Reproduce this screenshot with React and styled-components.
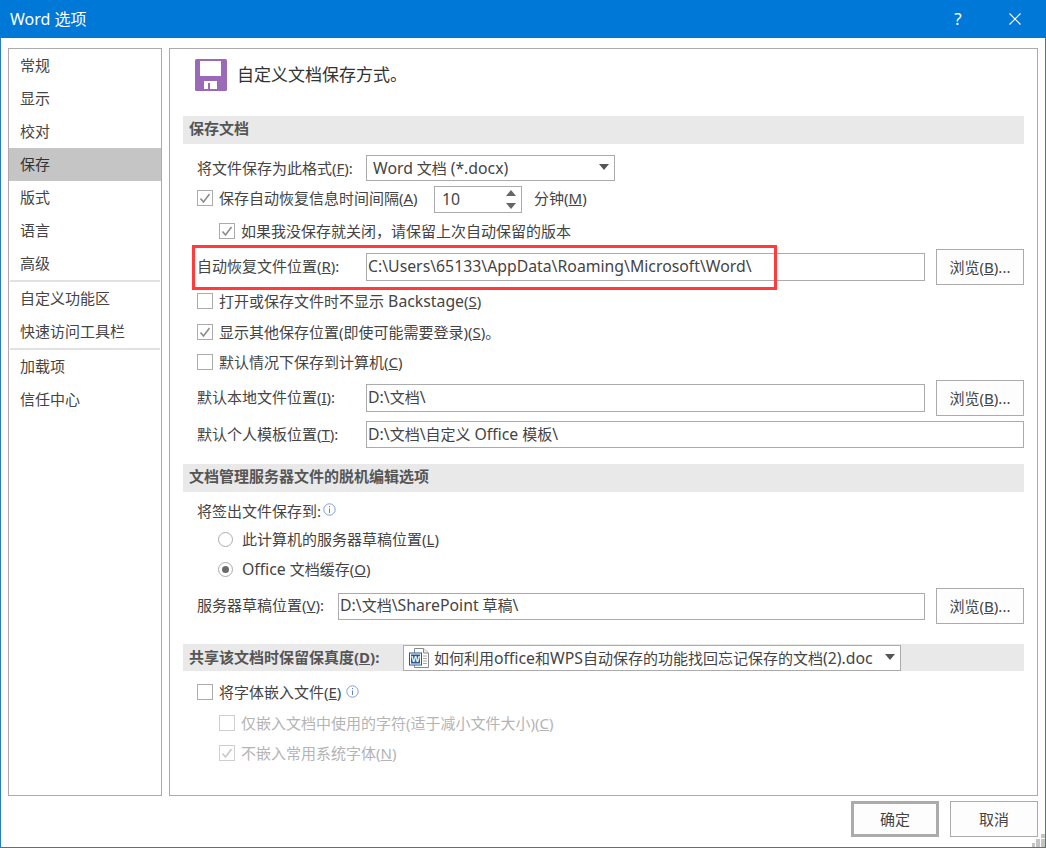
import React from 'react';
import styled, { createGlobalStyle } from 'styled-components';

const GlobalStyle = createGlobalStyle`
  html, body {
    margin: 0;
    padding: 0;
    background: #fff;
  }
  * {
    box-sizing: border-box;
  }
`;

const FONT = `"Noto Sans", "Noto Sans CJK SC", sans-serif`;

const Window = styled.div`
  position: relative;
  width: 1046px;
  height: 848px;
  display: flex;
  flex-direction: column;
  border: 1px solid #2b7cc4;
  border-top: none;
  background: #fff;
  color: #444;
  font-family: ${FONT};
  font-size: 15px;
  line-height: 20px;
`;

const TitleBar = styled.div`
  height: 38px;
  margin: 0 -1px;
  flex: none;
  display: flex;
  align-items: center;
  background: #0078d7;
  color: #fff;
  padding-left: 10px;
`;

const TitleText = styled.div`
  flex: 1;
  font-size: 16px;
`;

const HelpButton = styled.div`
  width: 16px;
  margin-right: 43px;
  font-size: 17px;
  text-align: center;
`;

const CloseButton = styled.svg`
  width: 12px;
  height: 12px;
  margin-right: 25px;
`;

const Body = styled.div`
  flex: 1;
  display: flex;
  gap: 7px;
  padding: 10px 7px 0;
  height: 748px;
  min-height: 0;
`;

const Nav = styled.nav`
  width: 154px;
  flex: none;
  border: 1px solid #ababab;
  display: flex;
  flex-direction: column;
`;

const NavItem = styled.div`
  height: 33px;
  flex: none;
  display: flex;
  align-items: center;
  padding: 0 0 2px 11px;
  background: ${(props) => (props.$active ? '#c5c5c5' : 'transparent')};
  color: ${(props) => (props.$active ? '#333' : '#444')};
`;

const NavDivider = styled.div`
  height: 2px;
  flex: none;
  margin: 0 1px;
  background: #e1e1e1;
`;

const Main = styled.main`
  flex: 1;
  position: relative;
  border: 1px solid #ababab;
  padding: 0 13px;
  display: flex;
  flex-direction: column;
`;

const Header = styled.header`
  height: 67px;
  flex: none;
  display: flex;
  align-items: flex-start;
  padding: 10px 0 0 12px;
  gap: 10px;
  font-size: 17px;
`;

const HeaderText = styled.div`
  margin-top: 6px;
  color: #333;
`;

const Section = styled.div`
  height: ${(props) => props.$h || 28}px;
  flex: none;
  display: flex;
  align-items: center;
  background: #e9e9e9;
  padding-left: 6px;
  margin-top: ${(props) => props.$mt || 0}px;
  font-weight: 700;
  color: #555;
`;

const SectionTitle = styled.span`
  padding-bottom: 5px;
`;

const Row = styled.div`
  height: ${(props) => props.$h}px;
  flex: none;
  display: flex;
  align-items: center;
  margin-top: ${(props) => props.$mt || 0}px;
  padding-left: ${(props) => props.$pl ?? 14}px;
  color: ${(props) => (props.$disabled ? '#b4b4b4' : 'inherit')};
`;

const Label = styled.label`
  width: ${(props) => props.$w}px;
  flex: none;
  white-space: nowrap;
  padding-bottom: ${(props) => props.$pb ?? 2}px;
`;

const Latin = styled.span`
  font-size: 15.8px;
`;

const Box = styled.span`
  width: 16px;
  height: 16px;
  flex: none;
  display: flex;
  align-items: center;
  justify-content: center;
  border: 1px solid ${(props) => (props.$disabled ? '#cfcfcf' : '#ababab')};
  margin-right: 6px;
  background: #fff;
`;

const Radio = styled.span`
  width: 15px;
  height: 15px;
  flex: none;
  display: flex;
  align-items: center;
  justify-content: center;
  border: 1px solid #ababab;
  border-radius: 50%;
  margin: 0 9px 0 21px;

  &::after {
    content: '';
    display: ${(props) => (props.$on ? 'block' : 'none')};
    width: 7px;
    height: 7px;
    border-radius: 50%;
    background: #6a6a6a;
  }
`;

const Field = styled.div`
  width: ${(props) => props.$w}px;
  height: ${(props) => props.$h || 28}px;
  flex: none;
  display: flex;
  align-items: center;
  border: 1px solid #ababab;
  padding: 0 0 2px 1px;
  background: #fff;
  color: #444;
  white-space: pre;
`;

const Combo = styled(Field)`
  padding: 0 5px 0 6px;
  justify-content: space-between;
`;

const SharedCombo = styled(Combo)`
  padding-left: 5px;
  font-weight: 400;
`;

const Caret = styled.span`
  width: 0;
  height: 0;
  margin-bottom: 2px;
  border-left: 5px solid transparent;
  border-right: 5px solid transparent;
  border-top: 6px solid #555;
`;

const Spin = styled(Field)`
  margin-top: 3px;
  padding: 0 4px 2px 7px;
  justify-content: space-between;
`;

const SpinArrows = styled.span`
  display: flex;
  flex-direction: column;
  gap: 7px;
  margin: 2px 1px 0 0;
`;

const SpinArrow = styled.span`
  width: 0;
  height: 0;
  border-left: 5px solid transparent;
  border-right: 5px solid transparent;
  border-${(props) => (props.$up ? 'bottom' : 'top')}: 6px solid #666;
`;

const Unit = styled.span`
  margin-left: 12px;
`;

const Button = styled.button`
  width: 88px;
  height: 36px;
  flex: none;
  border: ${(props) => (props.$primary ? '3px' : '1px')} solid #ababab;
  background: #fdfdfd;
  color: #444;
  font: inherit;
  padding: 0;
`;

const BrowseButton = styled(Button)`
  margin-left: 11px;
`;

const Highlight = styled.div`
  position: absolute;
  left: 22px;
  top: 196px;
  width: 585px;
  height: 45px;
  border: 3px solid #ff3b3b;
  pointer-events: none;
`;

const Footer = styled.footer`
  flex: none;
  height: 51px;
  padding: 5px 7px 0 0;
  display: flex;
  justify-content: flex-end;
  gap: 11px;
`;

const Grip = styled.svg`
  position: absolute;
  right: 0;
  bottom: 0;
  width: 13px;
  height: 13px;
`;

const InfoIcon = styled.svg`
  width: 13px;
  height: 13px;
  flex: none;
  align-self: flex-start;
  margin: ${(props) => props.$m};
`;

const ComboText = styled.span`
  display: flex;
  align-items: center;
  gap: 5px;
`;

const Check = ({ color = '#8c8c8c' }) => (
  <svg width="12" height="12" viewBox="0 0 12 12">
    <path d="M1.5 6.5 L4.5 10 L10.5 2" fill="none" stroke={color} strokeWidth="1.6" />
  </svg>
);

const CheckBox = ({ checked, disabled }) => (
  <Box $disabled={disabled}>{checked && <Check color={disabled ? '#c8c8c8' : '#8c8c8c'} />}</Box>
);

const Info = ({ m }) => (
  <InfoIcon $m={m} viewBox="0 0 13 13">
    <circle cx="6.5" cy="6.5" r="5.7" fill="none" stroke="#7f9fd0" />
    <rect x="6" y="5.5" width="1" height="4.5" fill="#5f84c0" />
    <rect x="6" y="3" width="1" height="1.2" fill="#5f84c0" />
  </InfoIcon>
);

const SaveIcon = () => (
  <svg width="32" height="32" viewBox="0 0 32 32">
    <rect x="0" y="0" width="32" height="32" rx="1.5" fill="#9a6ab8" />
    <rect x="5" y="2" width="21" height="15" fill="#fff" />
    <rect x="9" y="22" width="13" height="8" fill="#fff" />
    <rect x="13" y="24" width="2" height="6" fill="#9a6ab8" />
  </svg>
);

const WordDocIcon = () => (
  <svg width="20" height="20" viewBox="0 0 20 20">
    <path d="M5.5 0.5 H14.5 L19.5 5 V19.5 H5.5 Z" fill="#fff" stroke="#8a8a8a" />
    <path d="M14.5 0.5 V5 H19.5" fill="#eee" stroke="#8a8a8a" />
    <path d="M14 8 H18 M14 10.5 H18 M14 13 H18 M14 15.5 H18" stroke="#a8a8a8" />
    <rect x="0.5" y="5" width="12" height="12" fill="#fff" stroke="#2b5797" />
    <rect x="2" y="6.5" width="9" height="9" fill="#2b5797" />
    <text x="6.5" y="14" fontSize="9" fontWeight="700" fill="#fff" textAnchor="middle" fontFamily="Liberation Sans">W</text>
  </svg>
);

const navTop = ['常规', '显示', '校对', '保存', '版式', '语言', '高级'];

const App = () => (
  <Window>
    <GlobalStyle />
    <TitleBar>
      <TitleText>Word 选项</TitleText>
      <HelpButton>?</HelpButton>
      <CloseButton viewBox="0 0 12 12">
        <path d="M0.5 0.5 L11.5 11.5 M11.5 0.5 L0.5 11.5" stroke="#fff" strokeWidth="1.1" />
      </CloseButton>
    </TitleBar>

    <Body>
      <Nav>
        {navTop.map((name) => (
          <NavItem key={name} $active={name === '保存'}>{name}</NavItem>
        ))}
        <NavDivider />
        <NavItem>自定义功能区</NavItem>
        <NavItem>快速访问工具栏</NavItem>
        <NavDivider />
        <NavItem>加载项</NavItem>
        <NavItem>信任中心</NavItem>
      </Nav>

      <Main>
        <Header>
          <SaveIcon />
          <HeaderText>自定义文档保存方式。</HeaderText>
        </Header>

        <Section><SectionTitle>保存文档</SectionTitle></Section>
        <Row $h={30} $mt={9}>
          <Label $w={169} $pb={0}>将文件保存为此格式(<u>F</u>):</Label>
          <Combo $w={249} $h={26}><span><Latin>Word</Latin> 文档 <Latin>(*.docx)</Latin></span><Caret /></Combo>
        </Row>
        <Row $h={30}>
          <CheckBox checked />
          <Label $w={215} $pb={0}>保存自动恢复信息时间间隔(<u>A</u>)</Label>
          <Spin $w={88} $h={27}><Latin>10</Latin><SpinArrows><SpinArrow $up /><SpinArrow /></SpinArrows></Spin>
          <Unit>分钟(<u>M</u>)</Unit>
        </Row>
        <Row $h={32} $mt={2} $pl={36}>
          <CheckBox checked />
          如果我没保存就关闭，请保留上次自动保留的版本
        </Row>
        <Row $h={40}>
          <Label $w={169}>自动恢复文件位置(<u>R</u>):</Label>
          <Field $w={559}><Latin>C:\Users\65133\AppData\Roaming\Microsoft\Word\</Latin></Field>
          <BrowseButton>浏览(<u>B</u>)...</BrowseButton>
        </Row>
        <Row $h={26} $mt={1}>
          <CheckBox />
          打开或保存文件时不显示 <Latin>&nbsp;Backstage</Latin>(<u>S</u>)
        </Row>
        <Row $h={36}>
          <CheckBox checked />
          显示其他保存位置(即使可能需要登录)(<u>S</u>)。
        </Row>
        <Row $h={24}>
          <CheckBox />
          默认情况下保存到计算机(<u>C</u>)
        </Row>
        <Row $h={48}>
          <Label $w={169}>默认本地文件位置(<u>I</u>):</Label>
          <Field $w={559}><span><Latin>D:\</Latin>文档<Latin>\</Latin></span></Field>
          <BrowseButton>浏览(<u>B</u>)...</BrowseButton>
        </Row>
        <Row $h={25}>
          <Label $w={169}>默认个人模板位置(<u>T</u>):</Label>
          <Field $w={658} $h={27}><span><Latin>D:\</Latin>文档<Latin>\</Latin>自定义 <Latin>Office</Latin> 模板<Latin>\</Latin></span></Field>
        </Row>

        <Section $mt={17}><SectionTitle>文档管理服务器文件的脱机编辑选项</SectionTitle></Section>
        <Row $h={30} $mt={4}>
          <Label $w={126} $pb={0}>将签出文件保存到:</Label>
          <Info m="7px 0 0 0" />
        </Row>
        <Row $h={26}>
          <Radio />
          此计算机的服务器草稿位置(<u>L</u>)
        </Row>
        <Row $h={34}>
          <Radio $on />
          <Latin>Office</Latin>&nbsp;文档缓存(<u>O</u>)
        </Row>
        <Row $h={40}>
          <Label $w={141}>服务器草稿位置(<u>V</u>):</Label>
          <Field $w={587} $h={27}><span><Latin>D:\</Latin>文档<Latin>\SharePoint</Latin> 草稿<Latin>\</Latin></span></Field>
          <BrowseButton>浏览(<u>B</u>)...</BrowseButton>
        </Row>

        <Section $mt={18} $h={27}>
          <Label $w={214}>共享该文档时保留保真度(<u>D</u>):</Label>
          <SharedCombo $w={498} $h={26}>
            <ComboText>
              <WordDocIcon />
              <span>如何利用<Latin>office</Latin>和<Latin>WPS</Latin>自动保存的功能找回忘记保存的文档<Latin>(2).doc</Latin></span>
            </ComboText>
            <Caret />
          </SharedCombo>
        </Section>
        <Row $h={42}>
          <CheckBox />
          将字体嵌入文件(<u>E</u>)
          <Info m="14px 0 0 5px" />
        </Row>
        <Row $h={20} $pl={36} $disabled>
          <CheckBox disabled />
          仅嵌入文档中使用的字符(适于减小文件大小)(<u>C</u>)
        </Row>
        <Row $h={40} $pl={36} $disabled>
          <CheckBox checked disabled />
          不嵌入常用系统字体(<u>N</u>)
        </Row>

        <Highlight />
      </Main>
    </Body>

    <Footer>
      <Button $primary>确定</Button>
      <Button>取消</Button>
    </Footer>

    <Grip viewBox="0 0 13 13">
      <path d="M9 0h4v4H9z M9 5h4v4H9z M4 5h4v4H4z M9 9h4v4H9z M4 9h4v4H4z M0 9h3v4H0z" fill="#c4c4c4" />
    </Grip>
  </Window>
);

export default App;
